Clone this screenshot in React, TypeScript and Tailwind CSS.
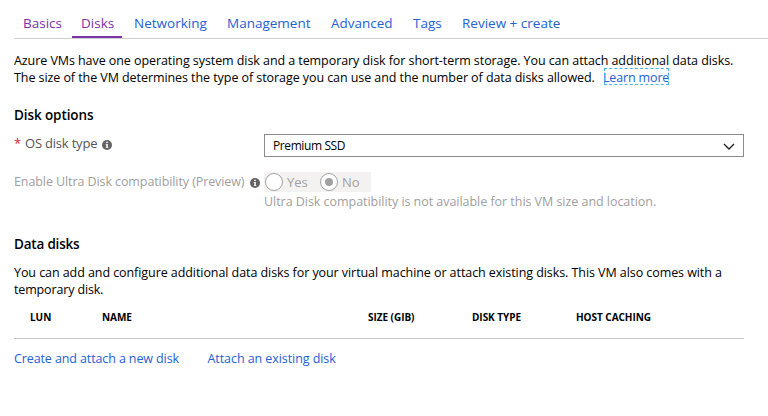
import React from 'react';

const tabs = [
  { label: 'Basics', box: 'w-[58px]', tone: 'text-[#7d33a5]', active: false },
  { label: 'Disks', box: 'w-[50px] mr-[3px]', tone: 'text-[#7d33a5]', active: true },
  { label: 'Networking', box: 'w-[93px]', tone: 'text-[#2560d6]', active: false },
  { label: 'Management', box: 'w-[104px]', tone: 'text-[#2560d6]', active: false },
  { label: 'Advanced', box: 'w-[82px]', tone: 'text-[#2560d6]', active: false },
  { label: 'Tags', box: 'w-[49px]', tone: 'text-[#2560d6]', active: false },
  { label: 'Review + create', box: 'w-[120px]', tone: 'text-[#2560d6]', active: false },
];

const columns = [
  { label: 'LUN', box: 'w-[72px]' },
  { label: 'NAME', box: 'w-[266px]' },
  { label: 'SIZE (GIB)', box: 'w-[104px]' },
  { label: 'DISK TYPE', box: 'w-[104px]' },
  { label: 'HOST CACHING', box: 'w-[150px]' },
];

function InfoIcon() {
  return (
    <svg className="block size-[10px] shrink-0" viewBox="0 0 10 10" aria-hidden="true">
      <circle cx="5" cy="5" r="5" fill="#636363" />
      <rect x="4.2" y="1.7" width="1.6" height="1.4" fill="#fff" />
      <path d="M3.7 4H5.8V7.4H6.4V8.1H3.7V7.4H4.3V4.7H3.7Z" fill="#fff" />
    </svg>
  );
}

function Radio({ checked }: { checked: boolean }) {
  return (
    <span className="flex size-[18px] shrink-0 items-center justify-center rounded-full border border-[#a3a3a3] bg-white">
      {checked && <span className="size-[8px] rounded-full bg-[#a0a0a0]" />}
    </span>
  );
}

export default function App() {
  return (
    <div className="h-[416px] w-[768px] overflow-hidden bg-white pl-[14px] font-['Open_Sans','Noto_Sans',sans-serif] text-[12.5px] leading-[17px] tracking-[-0.07px] whitespace-nowrap text-black">
      <nav className="flex h-[39px] border-b border-[#cfcfcf] pt-[13px] text-[13.5px] leading-5 tracking-normal">
        {tabs.map((t) => (
          <a
            key={t.label}
            className={`h-[25px] shrink-0 pl-[9px] ${t.box} ${t.tone} ${t.active ? 'border-b-2 border-[#7d33a5]' : ''}`}
          >
            {t.label}
          </a>
        ))}
      </nav>

      <p className="mt-[13px]">
        Azure VMs have one operating system disk and a temporary disk for short-term storage. You can attach additional data disks.
      </p>
      <p className="flex">
        <span className="w-[590px]">
          The size of the VM determines the type of storage you can use and the number of data disks allowed.
        </span>
        <a className="-mt-px h-[17px] w-[65px] -indent-px leading-[19px] tracking-[-0.15px] text-[#2560d6] outline-1 -outline-offset-1 outline-[#4db2e6] outline-dashed">
          Learn more
        </a>
      </p>

      <h2 className="mt-[19px] h-[20px] text-[13.5px] leading-5 font-semibold tracking-[-0.1px]">Disk options</h2>

      <div className="mt-[9px] flex h-[23px]">
        <label className="flex w-[250px] text-[13px] leading-[18px] tracking-[-0.2px] text-[#555]">
          <span className="w-[11px] text-[#e0222c]">*</span>
          <span className="w-[77px]">OS disk type</span>
          <span className="pt-[6px]"><InfoIcon /></span>
        </label>
        <div className="flex w-[480px] items-center justify-between border border-[#8c8c8c] pr-[8px] pl-[8px] text-[12px] tracking-[-0.4px]">
          <span>Premium SSD</span>
          <svg className="size-[12px]" viewBox="0 0 12 12" fill="none" stroke="#222" strokeWidth="1.4" aria-hidden="true">
            <path d="M1 4.1 6 9 11 4.1" />
          </svg>
        </div>
      </div>

      <div className="mt-[15px] flex h-[20px] text-[#a0a0a0]">
        <label className="flex w-[250px] leading-5 tracking-[-0.09px]">
          <span className="w-[236px]">Enable Ultra Disk compatibility (Preview)</span>
          <span className="pt-[6px]"><InfoIcon /></span>
        </label>
        <div className="flex w-[107px] items-center bg-[#f3f2f1] pl-px text-[13px] leading-[18px]">
          <Radio checked={false} />
          <span className="w-[37px] pl-[4px]">Yes</span>
          <Radio checked />
          <span className="pl-[4px]">No</span>
        </div>
      </div>
      <p className="mt-px pl-[250px] tracking-[-0.04px] text-[#a0a0a0]">
        Ultra Disk compatibility is not available for this VM size and location.
      </p>

      <h2 className="mt-[24px] h-[20px] text-[13.5px] leading-5 font-semibold tracking-[-0.2px]">Data disks</h2>
      <p className="mt-[10px]">
        You can add and configure additional data disks for your virtual machine or attach existing disks. This VM also comes with a
      </p>
      <p className="tracking-[-0.15px]">temporary disk.</p>

      <div className="mt-[11px] flex h-[30px] w-[730px] border-b border-[#c8c8c8] pl-[16px] text-[10px] leading-4 font-bold tracking-[-0.04px]">
        {columns.map((c) => (
          <span key={c.label} className={`shrink-0 ${c.box}`}>{c.label}</span>
        ))}
      </div>

      <div className="mt-[11px] flex text-[#2560d6]">
        <a className="w-[193.5px] tracking-[-0.11px]">Create and attach a new disk</a>
        <a>Attach an existing disk</a>
      </div>
    </div>
  );
}
